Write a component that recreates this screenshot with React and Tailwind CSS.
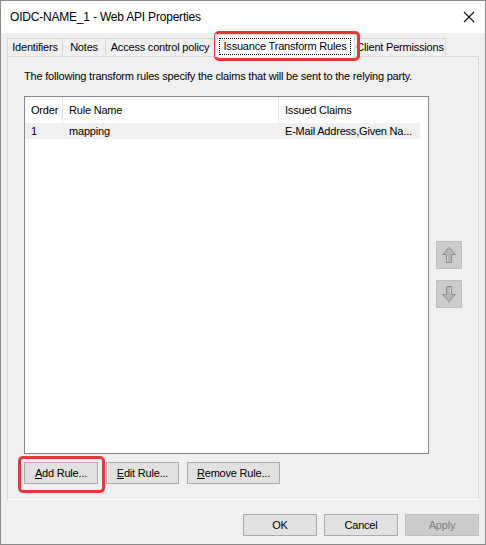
import React from 'react';

const font = { fontFamily: '"Liberation Sans", Arial, sans-serif' };

const Tab = ({ label, active, w }) =>
  active ? (
    <div
      className="relative z-10 -mb-px flex h-[23px] items-center justify-center border border-b-0 border-[#d9d9d9] bg-white"
      style={{ width: w }}
    >
      <span className="border border-dotted border-black px-[4px] leading-[15px]">{label}</span>
    </div>
  ) : (
    <div
      className="flex h-[18px] items-center justify-center border border-b-0 border-l-0 first:border-l border-[#d9d9d9] bg-[#f0f0f0] leading-none"
      style={{ width: w }}
    >
      {label}
    </div>
  );

const Button = ({ children, w, disabled }) => (
  <button
    className={`flex h-[22px] items-center justify-center border text-[11px] tracking-[-0.2px] ${
      disabled ? 'border-[#bfbfbf] bg-[#cccccc] text-[#838383]' : 'border-[#adadad] bg-[#e1e1e1] text-black'
    }`}
    style={{ width: w }}
  >
    {children}
  </button>
);

const Arrow = ({ down }) => (
  <div className="flex h-[28px] w-[26px] items-center justify-center border border-[#bfbfbf] bg-[#cccccc]">
    <svg width="16" height="18" viewBox="0 0 16 18" className={down ? 'rotate-180' : ''}>
      <path d="M8 1.5 L14.5 8.5 L10.5 8.5 L10.5 16.5 L5.5 16.5 L5.5 8.5 L1.5 8.5 Z" fill="#b5b5b5" stroke="#8c8c8c" strokeWidth="1" strokeLinejoin="round" />
      <path d="M6.5 9.5 L6.5 15.5" stroke="#d6d6d6" strokeWidth="1" />
    </svg>
  </div>
);

export default function App() {
  return (
    <div className="relative flex h-[545px] w-[486px] flex-col border border-[#8a8a8a] bg-[#f0f0f0] text-[11px] tracking-[-0.2px] text-black" style={font}>
      {/* title bar */}
      <div className="flex h-[32px] items-center justify-between bg-white pl-[9px] pr-[10px]">
        <span className="text-[12px]">OIDC-NAME_1 - Web API Properties</span>
        <svg width="12" height="12" viewBox="0 0 12 12">
          <path d="M1 1 L11 11 M11 1 L1 11" stroke="#111" strokeWidth="1.1" />
        </svg>
      </div>

      {/* tabs */}
      <div className="mt-[5px] flex h-[18px] items-end pl-[6px]">
        <Tab label="Identifiers" w={56} />
        <Tab label="Notes" w={43} />
        <Tab label="Access control policy" w={109} />
        <Tab label="Issuance Transform Rules" w={140} active />
        <Tab label="Client Permissions" w={91} />
      </div>

      {/* panel */}
      <div className="mx-[6px] flex h-[444px] flex-col border border-[#d9d9d9] border-b-white bg-[#f0f0f0] pl-[16px] pr-[16px]">
        <p className="mt-[12px] leading-[14px]">The following transform rules specify the claims that will be sent to the relying party.</p>
        <div className="mt-[13px] flex gap-[7px]">
          <div className="h-[358px] w-[406px] border border-[#828790] bg-white">
            <div className="flex h-[26px] w-[395px] items-center">
              <div className="flex h-full w-[38px] items-center border-r border-[#e5e5e5] pl-[6px]">Order</div>
              <div className="flex h-full w-[216px] items-center border-r border-[#e5e5e5] pl-[6px]">Rule Name</div>
              <div className="flex h-full flex-1 items-center pl-[6px]">Issued Claims</div>
            </div>
            <div className="flex h-[16px] w-[395px] items-center bg-[#efefef]">
              <div className="w-[38px] pl-[6px]">1</div>
              <div className="w-[216px] pl-[6px]">mapping</div>
              <div className="flex-1 pl-[6px]">E-Mail Address,Given Na...</div>
            </div>
          </div>
          <div className="flex flex-col gap-[11px] pt-[145px]">
            <Arrow />
            <Arrow down />
          </div>
        </div>
        <div className="mt-[8px] flex gap-[8px]">
          <Button w={74}><span><u>A</u>dd Rule...</span></Button>
          <Button w={73}><span><u>E</u>dit Rule...</span></Button>
          <Button w={93}><span><u>R</u>emove Rule...</span></Button>
        </div>
      </div>

      {/* footer */}
      <div className="mt-[14px] flex justify-end gap-[7px] pr-[6px]">
        <Button w={74}>OK</Button>
        <Button w={74}>Cancel</Button>
        <Button w={74} disabled>Apply</Button>
      </div>

      {/* red annotation boxes */}
      <div className="pointer-events-none absolute left-[213px] top-[30px] h-[30px] w-[146px] rounded-[5px] border-[3px] border-[#e53935]" />
      <div className="pointer-events-none absolute left-[17px] top-[455px] h-[37px] w-[87px] rounded-[5px] border-[3px] border-[#e53935]" />
    </div>
  );
}
